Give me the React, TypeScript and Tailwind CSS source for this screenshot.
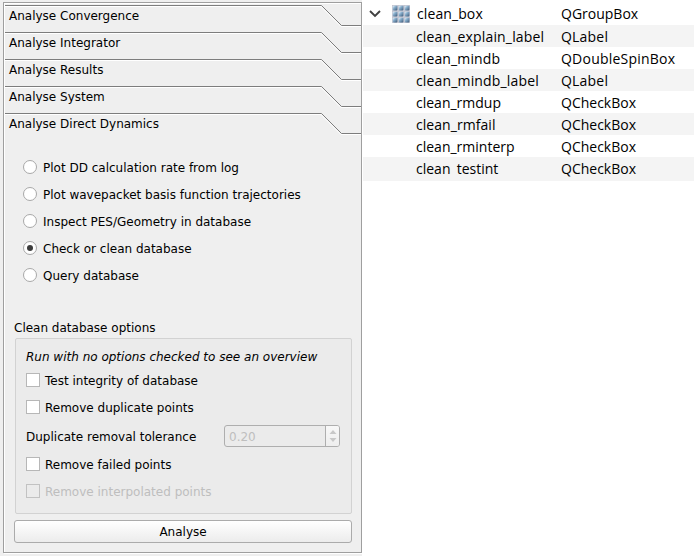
import React from "react";

const tabs = [
  "Analyse Convergence",
  "Analyse Integrator",
  "Analyse Results",
  "Analyse System",
  "Analyse Direct Dynamics",
];

const modes = [
  "Plot DD calculation rate from log",
  "Plot wavepacket basis function trajectories",
  "Inspect PES/Geometry in database",
  "Check or clean database",
  "Query database",
];

const objects = [
  { name: "clean_explain_label", type: "QLabel", nameClass: "tracking-[0.16px]", typeClass: "tracking-[0.2px]" },
  { name: "clean_mindb", type: "QDoubleSpinBox", nameClass: "tracking-[0.12px]", typeClass: "tracking-[0.22px]" },
  { name: "clean_mindb_label", type: "QLabel", nameClass: "tracking-[0.16px]", typeClass: "tracking-[0.2px]" },
  { name: "clean_rmdup", type: "QCheckBox", nameClass: "", typeClass: "" },
  { name: "clean_rmfail", type: "QCheckBox", nameClass: "tracking-[0.06px]", typeClass: "" },
  { name: "clean_rminterp", type: "QCheckBox", nameClass: "", typeClass: "" },
  { name: "clean testint", type: "QCheckBox", nameClass: "[word-spacing:2.6px]", typeClass: "" },
];

function Tab({ label }: { label: string }) {
  return (
    <div className="relative h-[27px] w-[356px] pl-1 pt-[3px] leading-4">
      <svg className="absolute left-0 top-0 overflow-visible" width="356" height="27" fill="none">
        <path d="M0 1.5H316L336 21.5H356" stroke="#ffffff" />
        <path d="M0 0.5H316.5L336.5 20.5H356" stroke="#7d7d7d" />
      </svg>
      <span className="relative">{label}</span>
    </div>
  );
}

function Radio({ label, checked }: { label: string; checked: boolean }) {
  return (
    <div className="flex h-[27px] items-start">
      <span className="mr-[6px] mt-[7px] flex size-[14px] items-center justify-center rounded-full border border-[#a8a8a8] bg-white">
        {checked && <span className="size-[6px] rounded-full bg-[#3c3c3c]" />}
      </span>
      <span className="mt-[6px] leading-[18px]">{label}</span>
    </div>
  );
}

function Check({ label, disabled = false }: { label: string; disabled?: boolean }) {
  return (
    <div className={"flex h-[27px] items-start " + (disabled ? "text-[#bebebe]" : "")}>
      <span
        className={
          "mr-[5px] mt-[7px] size-[14px] border " +
          (disabled ? "border-[#c2c2c2] bg-[#ebebeb]" : "border-[#b7b7b7] bg-white")
        }
      />
      <span className="mt-[6px] leading-[18px]">{label}</span>
    </div>
  );
}

function GridIcon() {
  return (
    <svg width="18" height="18">
      <defs>
        <linearGradient id="cell" x1="0" y1="0" x2="1" y2="1">
          <stop offset="0" stopColor="#e6f6ff" />
          <stop offset="0.4" stopColor="#86acca" />
          <stop offset="1" stopColor="#3f5a78" />
        </linearGradient>
      </defs>
      <rect width="18" height="18" fill="#c3c6d2" />
      {[0, 1, 2].map((r) =>
        [0, 1, 2].map((c) => (
          <rect key={`${r}${c}`} x={c * 6 + 0.8} y={r * 6 + 0.8} width="4.6" height="4.6" rx="0.8" fill="url(#cell)" />
        ))
      )}
    </svg>
  );
}

export default function App() {
  return (
    <div className="flex h-[556px] w-[694px] overflow-hidden bg-white text-black">
      <div className="h-[556px] w-[363px] border-r border-white bg-[#efefef] pl-[3px] pt-[2px] font-['DejaVu_Sans',sans-serif] text-[12px]">
        <div className="h-[551px] w-[359px] border border-[#9f9f9f] shadow-[1px_1px_0_#ffffff]">
          <div className="h-[549px] border-l border-t border-white pt-px">
            {tabs.map((t) => (
              <Tab key={t} label={t} />
            ))}
            <div className="ml-[18px] mt-[13px]">
              {modes.map((m) => (
                <Radio key={m} label={m} checked={m === "Check or clean database"} />
              ))}
            </div>
            <div className="ml-[9px] mt-[31px] h-[18px] leading-[18px]">Clean database options</div>
            <div className="ml-[10px] mt-px h-[176px] w-[337px] rounded-[2px] border border-[#d2d2d2] bg-[#ebebeb] pl-[10px] pt-[10px]">
              <div className="h-[17px] italic leading-4">Run with no options checked to see an overview</div>
              <Check label="Test integrity of database" />
              <Check label="Remove duplicate points" />
              <div className="flex h-[30px] items-center pt-[2px]">
                <span className="w-[198px] pt-[2px] leading-[18px]">Duplicate removal tolerance</span>
                <div className="flex h-[22px] w-[116px] overflow-hidden rounded-[3px] border border-[#aeaeae] text-[#bebebe]">
                  <span className="flex-1 pl-1 leading-[22px]">0.20</span>
                  <span className="flex w-[14px] items-center justify-center border-l border-[#aeaeae] bg-linear-to-b from-[#f8f8f8] to-[#eeeeee]">
                    <svg width="8" height="14" fill="#c8c8c8">
                      <path d="M0.5 5L4 1L7.5 5ZM0.5 9H7.5L4 13Z" />
                    </svg>
                  </span>
                </div>
              </div>
              <Check label="Remove failed points" />
              <Check label="Remove interpolated points" disabled />
            </div>
            <button className="ml-[9px] mt-[6px] block h-[23px] w-[338px] rounded-[3px] border border-[#ababab] bg-linear-to-b from-white to-[#ececec] pt-px leading-[20px]">
              Analyse
            </button>
          </div>
        </div>
      </div>
      <div className="w-[331px] font-['Open_Sans','Noto_Sans',sans-serif] text-[14px]">
        <div className="flex h-[25px] items-center pt-[2px]">
          <svg className="ml-[6px]" width="12" height="8" fill="none" stroke="#404040" strokeWidth="1.9">
            <path d="M1 1L6 6L11 1" />
          </svg>
          <span className="ml-[11px] mr-[7px]">
            <GridIcon />
          </span>
          <span className="w-[144px] tracking-[0.1px]">clean_box</span>
          <span>QGroupBox</span>
        </div>
        {objects.map(({ name, type, nameClass, typeClass }) => (
          <div
            key={name}
            className="flex h-[22px] items-start pl-[53px] leading-[24px] last:h-[24px] odd:bg-white even:bg-[#f4f4f4]"
          >
            <span className={"w-[145px] whitespace-nowrap " + nameClass}>{name}</span>
            <span className={typeClass}>{type}</span>
          </div>
        ))}
      </div>
    </div>
  );
}
